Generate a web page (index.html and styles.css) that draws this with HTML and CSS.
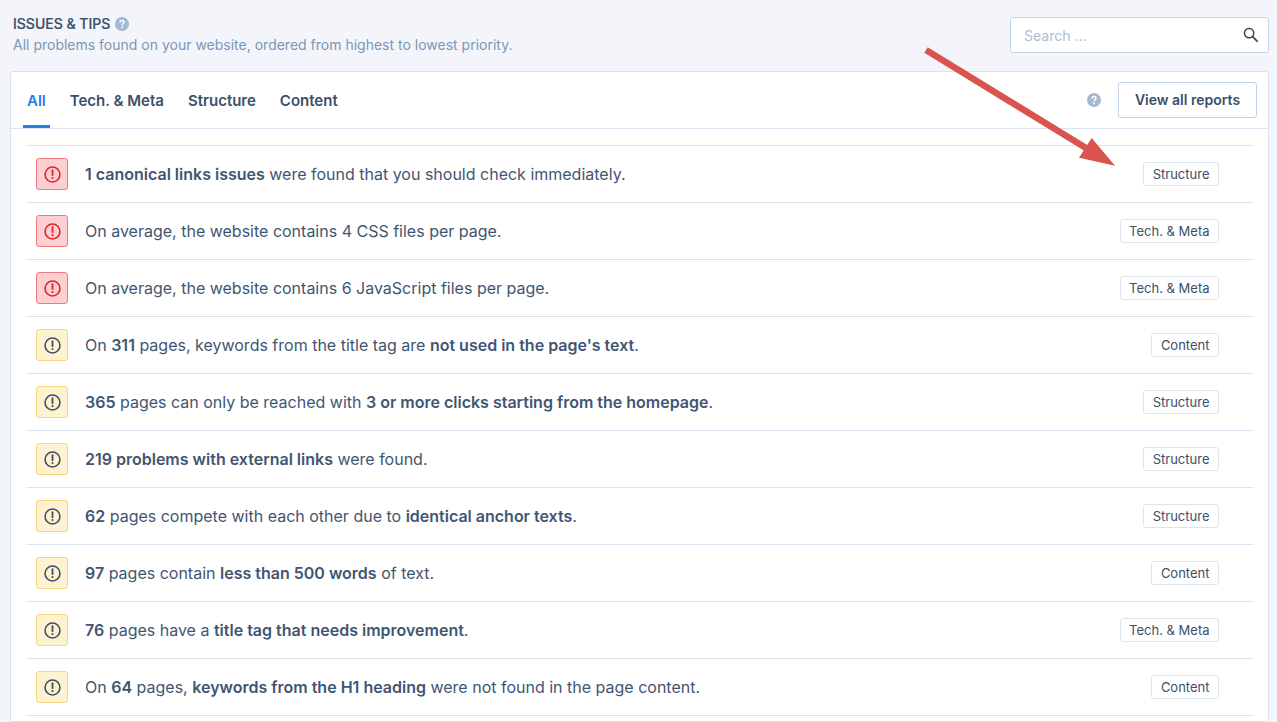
FILE: index.html
```html
<!DOCTYPE html>
<html lang="en">
<head>
<meta charset="utf-8">
<title>Issues &amp; Tips</title>
<link rel="stylesheet" href="styles.css">
</head>
<body>
<svg width="0" height="0" class="defs">
  <symbol id="alert" viewBox="0 0 16 16">
    <circle cx="8" cy="8" r="7" fill="none" stroke="currentColor" stroke-width="1.5"/>
    <path d="M8 4v4.6" fill="none" stroke="currentColor" stroke-width="1.7" stroke-linecap="round"/>
    <circle cx="8" cy="11.4" r="1" fill="currentColor"/>
  </symbol>
  <symbol id="help" viewBox="0 0 14 14">
    <circle cx="7" cy="7" r="7" fill="#a3b8d1"/>
    <path d="M5 5.4C5 4.2 5.9 3.5 7 3.5s2 .7 2 1.8c0 1.5-2 1.4-2 3" fill="none" stroke="#fff" stroke-width="1.5"/>
    <circle cx="7" cy="10.3" r=".95" fill="#fff"/>
  </symbol>
</svg>
<header class="top">
  <div class="heading">
    <h1 class="title">ISSUES &amp; TIPS <svg class="help"><use href="#help"/></svg></h1>
    <p class="sub">All problems found on your website, ordered from highest to lowest priority.</p>
  </div>
  <div class="search">
    <span class="placeholder">Search ...</span>
    <svg class="search-icon" viewBox="0 0 16 16"><circle cx="6.5" cy="6.5" r="5" fill="none" stroke="currentColor" stroke-width="1.6"/><path d="M10.3 10.3L15 15" stroke="currentColor" stroke-width="1.9" stroke-linecap="round"/></svg>
  </div>
</header>
<main class="card">
  <div class="tabs">
    <nav class="tablist">
      <a class="tab active">All</a>
      <a class="tab">Tech. &amp; Meta</a>
      <a class="tab">Structure</a>
      <a class="tab">Content</a>
    </nav>
    <div class="actions">
      <svg class="help"><use href="#help"/></svg>
      <button class="btn">View all reports</button>
    </div>
  </div>
  <ul class="list">
    <li class="row"><span class="badge red"><svg><use href="#alert"/></svg></span><span class="text"><b>1 canonical links issues</b> were found that you should check immediately.</span><span class="tag">Structure</span></li>
    <li class="row"><span class="badge red"><svg><use href="#alert"/></svg></span><span class="text">On average, the website contains 4 CSS files per page.</span><span class="tag">Tech. &amp; Meta</span></li>
    <li class="row"><span class="badge red"><svg><use href="#alert"/></svg></span><span class="text">On average, the website contains 6 JavaScript files per page.</span><span class="tag">Tech. &amp; Meta</span></li>
    <li class="row"><span class="badge yellow"><svg><use href="#alert"/></svg></span><span class="text">On <b>311</b> pages, keywords from the title tag are <b>not used in the page's text</b>.</span><span class="tag">Content</span></li>
    <li class="row"><span class="badge yellow"><svg><use href="#alert"/></svg></span><span class="text"><b>365</b> pages can only be reached with <b>3 or more clicks starting from the homepage</b>.</span><span class="tag">Structure</span></li>
    <li class="row"><span class="badge yellow"><svg><use href="#alert"/></svg></span><span class="text"><b>219 problems with external links</b> were found.</span><span class="tag">Structure</span></li>
    <li class="row"><span class="badge yellow"><svg><use href="#alert"/></svg></span><span class="text"><b>62</b> pages compete with each other due to <b>identical anchor texts</b>.</span><span class="tag">Structure</span></li>
    <li class="row"><span class="badge yellow"><svg><use href="#alert"/></svg></span><span class="text"><b>97</b> pages contain <b>less than 500 words</b> of text.</span><span class="tag">Content</span></li>
    <li class="row"><span class="badge yellow"><svg><use href="#alert"/></svg></span><span class="text"><b>76</b> pages have a <b>title tag that needs improvement</b>.</span><span class="tag">Tech. &amp; Meta</span></li>
    <li class="row"><span class="badge yellow"><svg><use href="#alert"/></svg></span><span class="text">On <b>64</b> pages, <b>keywords from the H1 heading</b> were not found in the page content.</span><span class="tag">Content</span></li>
  </ul>
</main>
<svg class="arrow" width="1277" height="722" viewBox="0 0 1277 722"><path d="M926 50L1086 148" stroke="#d9534f" stroke-width="6.5"/><path d="M1091.700 138L1079 157.700L1115 165.700Z" fill="#d9534f"/></svg>
</body>
</html>
```
FILE: styles.css
```css
* { box-sizing: border-box; }
html, body { margin: 0; height: 722px; overflow: hidden; }
body {
  background: #f3f5fa;
  color: #3c5069;
  font-family: Inter, "Liberation Sans", sans-serif;
  padding: 0 8px 0 10px;
}
.defs { position: absolute; }
.top {
  display: flex;
  justify-content: space-between;
  height: 71px;
  padding: 17px 0 0 3px;
}
.title {
  margin: -1px 0 0;
  font-size: 14px;
  font-weight: 500;
  line-height: 16px;
  display: flex;
  align-items: center;
  gap: 5px;
  -webkit-text-stroke: 0.2px currentColor;
}
.sub {
  margin: 4px 0 0;
  font-size: 14px;
  line-height: 17px;
  color: #7b97b8;
}
.help { width: 14px; height: 14px; }
.search {
  width: 259px;
  height: 36px;
  background: #fff;
  border: 1px solid #c5d5e8;
  border-radius: 3px;
  display: flex;
  align-items: center;
  justify-content: space-between;
  padding: 0 10px 0 13px;
  font-size: 14px;
  color: #a9bfd8;
}
.placeholder { padding-top: 1px; }
.search-icon { width: 15px; height: 15px; color: #33475f; margin-top: -2px; }
.card {
  background: #fff;
  border: 1px solid #d9e3ef;
  border-radius: 3px;
  height: 651px;
  padding: 0 15px 0 16px;
}
.tabs {
  display: flex;
  justify-content: space-between;
  align-items: center;
  height: 57px;
  margin: 0 -15px 0 -16px;
  padding: 0 11px 0 12px;
  border-bottom: 1px solid #d9e3ef;
}
.tablist { display: flex; gap: 16px; height: 100%; }
.tab {
  font-size: 15px;
  font-weight: 600;
  line-height: 57px;
  height: 56px;
  padding: 0 4px;
  color: #3c5069;
}
.tab.active {
  color: #2080e8;
  border-bottom: 3px solid #2080e8;
}
.actions { display: flex; align-items: center; gap: 17px; }
.btn {
  width: 139px;
  height: 36px;
  background: #fff;
  border: 1px solid #c5d5e8;
  border-radius: 3px;
  font: 600 14px Inter, sans-serif;
  color: #3c5069;
  padding: 0 0 1px;
}
.list {
  list-style: none;
  margin: 16px 0 0;
  padding: 0;
  border-top: 1px solid #d9e3ef;
}
.row {
  display: flex;
  align-items: center;
  height: 57px;
  padding: 0 34px 0 9px;
  border-bottom: 1px solid #d9e3ef;
}
.badge {
  flex: none;
  width: 32px;
  height: 32px;
  border-radius: 3px;
  border: 1px solid;
  display: flex;
  align-items: center;
  justify-content: center;
}
.badge svg { width: 17px; height: 17px; }
.red { background: #fccfd1; border-color: #f3787e; color: #e4202c; }
.yellow { background: #fff2d0; border-color: #f7d57e; color: #3c5069; }
.text {
  flex: 1;
  margin-left: 17px;
  font-size: 16px;
  color: #3f5672;
}
.text b { font-weight: 600; }
.tag {
  flex: none;
  height: 24px;
  padding: 0 8.5px;
  border: 1px solid #dbe5f0;
  border-radius: 3px;
  font-size: 13px;
  line-height: 23px;
  color: #3c5069;
}
.arrow { position: absolute; left: 0; top: 0; pointer-events: none; }
```
